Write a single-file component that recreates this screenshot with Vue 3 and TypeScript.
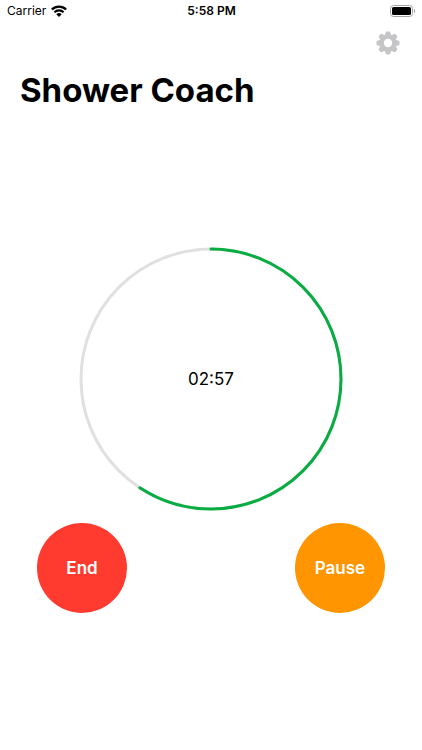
<script setup lang="ts">
import { computed, ref } from 'vue'

const total = 300
const remaining = ref(177.6)
const radius = 130
const circumference = 2 * Math.PI * radius

const clock = computed(() => {
  const seconds = Math.floor(remaining.value)
  const pad = (n: number) => String(n).padStart(2, '0')
  return `${pad(Math.floor(seconds / 60))}:${pad(seconds % 60)}`
})

const dash = computed(() => `${(circumference * remaining.value) / total} ${circumference}`)

const teeth = Array.from({ length: 8 }, (_, i) => i * 45)
</script>

<template>
  <div class="screen">
    <header class="status">
      <div class="carrier">
        <span>Carrier</span>
        <svg width="16" height="12" viewBox="0 0 16 12" aria-hidden="true">
          <path d="M0.9 4.5a10.1 10.1 0 0 1 14.2 0" fill="none" stroke="#000" stroke-width="2.4" />
          <path d="M3.4 7.3a6.5 6.5 0 0 1 9.2 0" fill="none" stroke="#000" stroke-width="2.1" />
          <path d="M8 12 5.3 9.3a3.8 3.8 0 0 1 5.4 0z" />
        </svg>
      </div>
      <span class="time">5:58 PM</span>
      <svg class="battery" width="26" height="12" viewBox="0 0 26 12" aria-hidden="true">
        <rect x="0.5" y="0.5" width="22" height="11" rx="3" fill="none" stroke="#a3a3a3" />
        <rect x="2" y="2" width="19" height="8" rx="1.6" />
        <path d="M24 4a2.2 2.2 0 0 1 0 4z" fill="#a3a3a3" />
      </svg>
    </header>

    <nav class="toolbar">
      <button class="settings" type="button" aria-label="Settings">
        <svg width="24" height="24" viewBox="-12 -12 24 24" aria-hidden="true">
          <circle r="6.5" fill="none" stroke="#c5c5c7" stroke-width="4.6" />
          <path
            v-for="angle in teeth"
            :key="angle"
            d="M-3.2-7.4-2.3-10.6Q-2-11.5-1.2-11.5H1.2Q2-11.5 2.3-10.6L3.2-7.4z"
            :transform="`rotate(${angle})`"
            fill="#c5c5c7"
          />
        </svg>
      </button>
    </nav>

    <h1>Shower Coach</h1>

    <main>
      <div class="dial">
        <svg viewBox="0 0 264 264" aria-hidden="true">
          <circle cx="132" cy="132" :r="radius" class="track" />
          <circle
            cx="132"
            cy="132"
            :r="radius"
            class="progress"
            :stroke-dasharray="dash"
            transform="rotate(-90 132 132)"
          />
        </svg>
        <span class="clock" role="timer">{{ clock }}</span>
      </div>
      <div class="actions">
        <button class="round end" type="button">End</button>
        <button class="round pause" type="button">Pause</button>
      </div>
    </main>
  </div>
</template>

<style>
body {
  background: #fff;
}
</style>

<style scoped>
.screen {
  box-sizing: border-box;
  min-height: 100vh;
  display: flex;
  flex-direction: column;
  font-family: Inter, "Liberation Sans", sans-serif;
  color: #000;
}

.status {
  display: grid;
  grid-template-columns: 1fr auto 1fr;
  align-items: center;
  height: 22px;
  padding: 0 6px 0 7px;
  font-size: 12px;
  line-height: 16px;
}

.carrier {
  display: flex;
  align-items: center;
  gap: 5px;
}

.time {
  font-weight: 600;
}

.battery {
  justify-self: end;
}

.toolbar {
  display: flex;
  justify-content: flex-end;
  align-items: center;
  height: 42px;
  padding: 0 22px;
}

button {
  border: 0;
  font-family: inherit;
  cursor: pointer;
}

.settings {
  display: flex;
  padding: 0;
  background: none;
}

h1 {
  margin: 0;
  padding: 5px 20px 3px;
  font-size: 33px;
  line-height: 42px;
  font-weight: 700;
}

main {
  flex: 1;
  display: flex;
  flex-direction: column;
  justify-content: center;
  gap: 12px;
  padding-bottom: 4px;
}

.dial {
  display: grid;
  place-items: center;
  align-self: center;
}

.dial > * {
  grid-area: 1 / 1;
}

.dial svg {
  width: 264px;
}

.dial circle {
  fill: none;
  stroke-width: 3;
}

.track {
  stroke: #e0e0e0;
}

.progress {
  stroke: #08ad42;
  stroke-linecap: round;
}

.clock {
  font-size: 17px;
  line-height: 22px;
}

.actions {
  display: flex;
  justify-content: space-between;
  padding: 0 37px;
}

.round {
  width: 90px;
  height: 90px;
  padding: 0;
  border-radius: 50%;
  color: #fff;
  font-size: 17px;
  line-height: 22px;
  font-weight: 600;
}

.end {
  background: #ff3b30;
}

.pause {
  background: #ff9500;
}
</style>
